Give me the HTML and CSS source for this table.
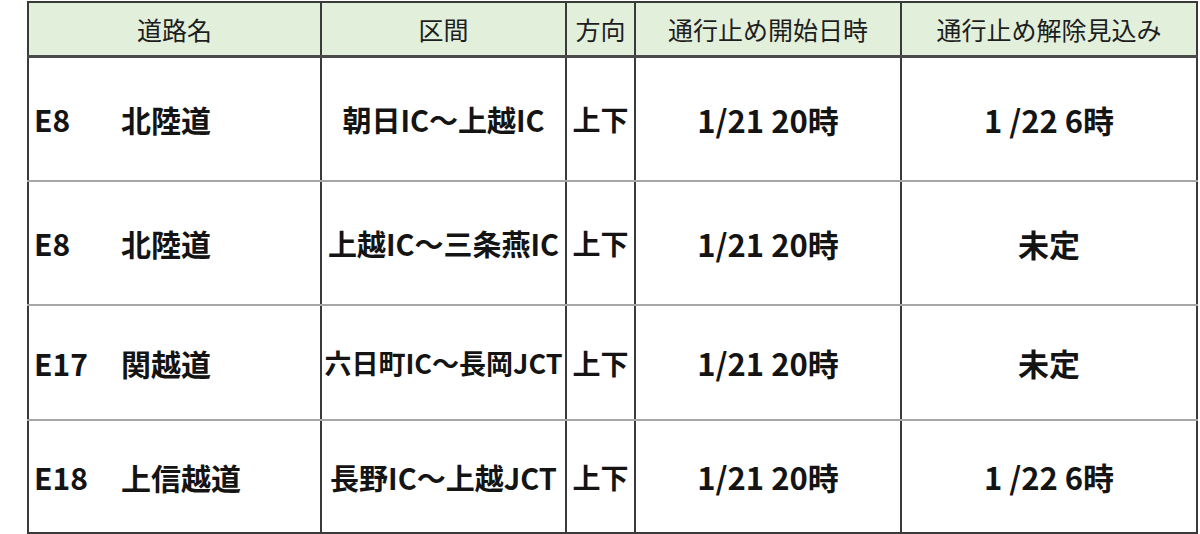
FILE: index.html
```html
<!DOCTYPE html>
<html lang="ja">
<head>
<meta charset="utf-8">
<title>通行止め情報</title>
<link rel="stylesheet" href="styles.css">
</head>
<body>
<table class="closures">
  <colgroup>
    <col class="c-road">
    <col class="c-sect">
    <col class="c-dir">
    <col class="c-start">
    <col class="c-end">
  </colgroup>
  <thead>
    <tr class="head">
      <th>道路名</th>
      <th>区間</th>
      <th>方向</th>
      <th>通行止め開始日時</th>
      <th>通行止め解除見込み</th>
    </tr>
  </thead>
  <tbody>
    <tr class="r1">
      <td class="road"><span class="code">E8</span><span class="name">北陸道</span></td>
      <td class="sect">朝日IC～上越IC</td>
      <td class="dir">上下</td>
      <td class="date">1/21 20時</td>
      <td class="date">1 /22 6時</td>
    </tr>
    <tr class="r2">
      <td class="road"><span class="code">E8</span><span class="name">北陸道</span></td>
      <td class="sect">上越IC～三条燕IC</td>
      <td class="dir">上下</td>
      <td class="date">1/21 20時</td>
      <td class="date">未定</td>
    </tr>
    <tr class="r3">
      <td class="road"><span class="code">E17</span><span class="name">関越道</span></td>
      <td class="sect small">六日町IC～長岡JCT</td>
      <td class="dir">上下</td>
      <td class="date">1/21 20時</td>
      <td class="date">未定</td>
    </tr>
    <tr class="r4">
      <td class="road"><span class="code">E18</span><span class="name">上信越道</span></td>
      <td class="sect">長野IC～上越JCT</td>
      <td class="dir">上下</td>
      <td class="date">1/21 20時</td>
      <td class="date">1 /22 6時</td>
    </tr>
  </tbody>
</table>
</body>
</html>
```

FILE: styles.css
```css
html, body {
  margin: 0;
  padding: 0;
  background: #ffffff;
}

body {
  padding: 1px 0 0 27px;
  font-family: "Noto Sans CJK JP", "Noto Sans", sans-serif;
  color: #141414;
}

.closures {
  border-collapse: collapse;
  table-layout: fixed;
  width: 1169px;
  border: 2px solid #3a3a3a;
}

.c-road { width: 293px; }
.c-sect { width: 245px; }
.c-dir { width: 69px; }
.c-start { width: 266px; }
.c-end { width: 296px; }

th, td {
  padding: 0;
  border-left: 2px solid #3a3a3a;
  border-right: 2px solid #3a3a3a;
  border-top: 2px solid #a6a6a6;
  border-bottom: 2px solid #a6a6a6;
  text-align: center;
  vertical-align: middle;
  white-space: nowrap;
  overflow: hidden;
}

.head th {
  height: 52px;
  background: #e2efda;
  font-size: 25px;
  font-weight: 400;
  color: #1e1e1e;
  border-top: 2px solid #3a3a3a;
  border-bottom: 3px solid #4a4a4a;
}

.r1 td { height: 122px; }
.r2 td { height: 122px; }
.r3 td { height: 113px; }
.r4 td { height: 111px; }

.r4 td {
  border-bottom: 2px solid #3a3a3a;
}

td {
  font-size: 28px;
  font-weight: 700;
}

.road {
  text-align: left;
  padding-left: 5px;
  font-size: 30px;
}

.code {
  display: inline-block;
  width: 87px;
}

.sect {
  font-size: 29px;
}

.sect.small {
  font-size: 27px;
}

.dir {
  font-size: 28px;
}

.date {
  font-size: 31px;
}
```
